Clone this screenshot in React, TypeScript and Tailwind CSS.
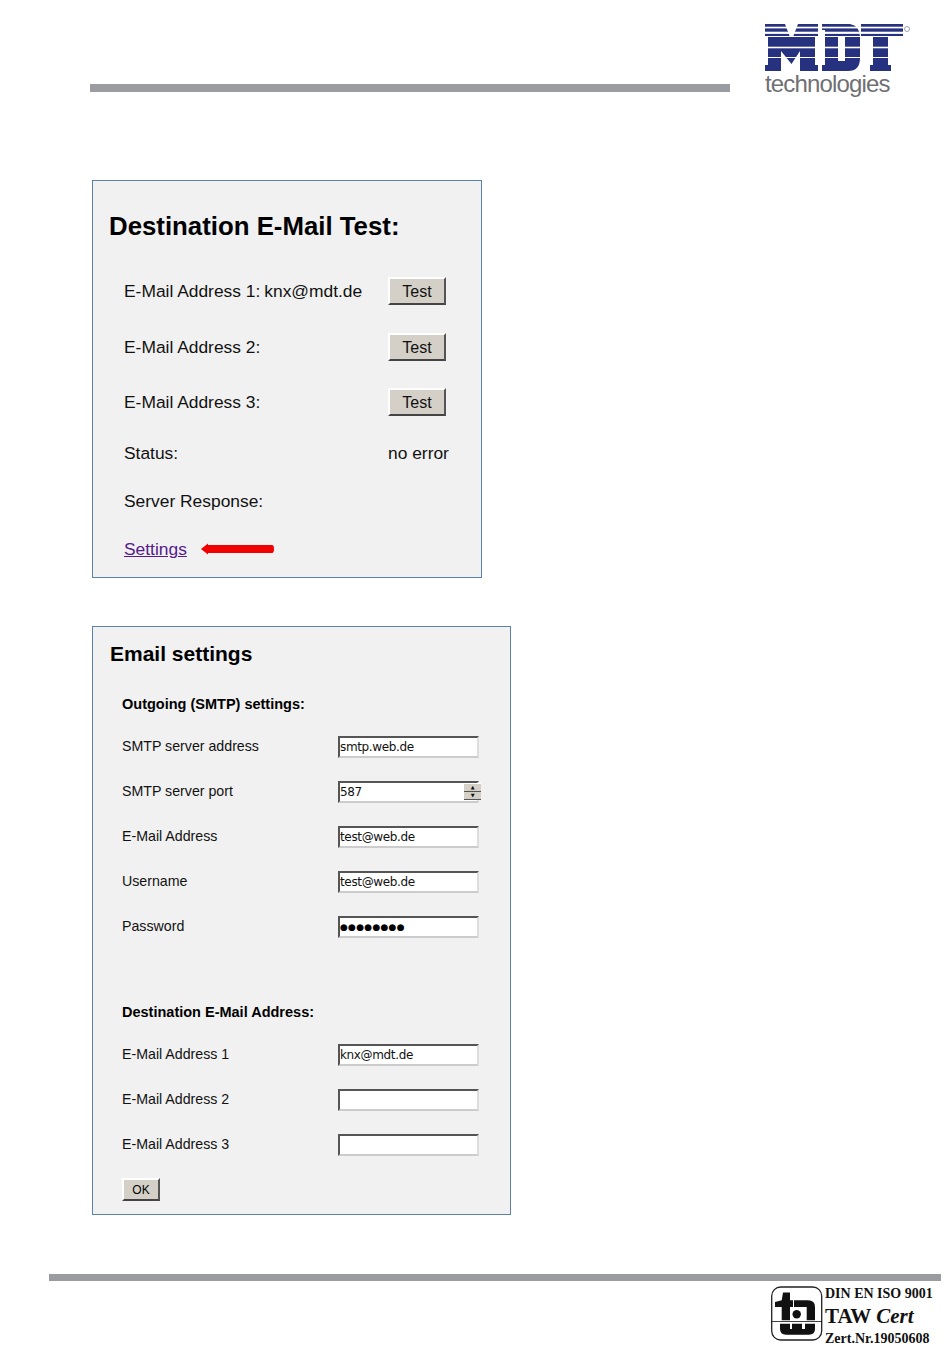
const sans = "font-['Liberation_Sans',Arial,sans-serif]";

function MdtLogo() {
  return (
    <svg width="150" height="48" viewBox="0 0 150 48" className="block">
      <g fill="#26327f">
        <path d="M1 0H21L26 13H29L34 0H54V13H51V41H54V47H36V27L27.5 40L17 27V47H1V41H4V13H1Z" />
        <path d="M58 0H86Q96 2 96 13V34Q96 47 84 47H58V41H61V6H58ZM74 13V37H81V13Z" fillRule="evenodd" />
        <path d="M97 0H139V13H124V41H127V47H106V41H109V13H97Z" />
      </g>
      <g fill="#ffffff">
        <rect x="0" y="2.7" width="142" height="1.7" />
        <rect x="0" y="7.7" width="142" height="2.2" />
        <rect x="0" y="12" width="142" height="1" />
        <rect x="0" y="22.7" width="142" height="1.6" />
        <rect x="0" y="33" width="142" height="1" />
      </g>
      <circle cx="143" cy="5" r="2.5" fill="none" stroke="#8a8f99" strokeWidth="0.8" />
    </svg>
  );
}

function TaLogo() {
  return (
    <svg width="54" height="56" viewBox="0 0 54 56" className="block">
      <rect x="1.7" y="1" width="50" height="53" rx="9" fill="#fff" stroke="#222" strokeWidth="1.3" />
      <g fill="#111">
        <path d="M13 6.5H20V14.3H23V21H20V34.3H11.7V21H5V16L11.7 14.3Z" />
        <path d="M24 14.3H38Q45 14.3 45 21V34.3H36.7V21H24Z" />
        <circle cx="26.7" cy="28.3" r="4.2" />
        <rect x="2" y="35" width="50" height="0.8" />
        <path d="M10 37.7H20V43H22V37.7H32V43H35V37.7H45V43Q45 48.7 39 48.7H16Q10 48.7 10 43Z" />
      </g>
    </svg>
  );
}

function Row({ label, value, test }: { label: string; value?: string; test?: boolean }) {
  return (
    <div className="flex items-center h-[28px] text-[17.4px] text-[#111]">
      <div className="w-[264px] whitespace-nowrap">{label}{value ? <span className="ml-[4px]">{value}</span> : null}</div>
      {test ? (
        <button className="w-[58px] h-[28px] bg-[#d4d0c8] text-[16px] pt-[1px] border-2 border-t-white border-l-white border-r-[#555] border-b-[#444]">Test</button>
      ) : null}
    </div>
  );
}

function Field({ label, value, type, spin }: { label: string; value?: string; type?: string; spin?: boolean }) {
  return (
    <div className="flex items-center h-[22px] mb-[23px] text-[14.2px] text-[#111]">
      <div className="w-[216px]">{label}</div>
      <div className="relative w-[141px] h-[22px] bg-white border-2 border-t-[#555] border-l-[#555] border-r-[#ddd] border-b-[#ccc] flex items-center font-['DejaVu_Sans',sans-serif] text-[12px] tracking-[-0.35px] leading-none">
        {type === "password" ? <span className="text-[9px] tracking-[0.25px] text-black">●●●●●●●●</span> : value}
        {spin ? (
          <div className="absolute left-[124px] top-[0px] w-[17px] h-[17px] flex flex-col">
            <div className="h-[9px] bg-[#d4d0c8] border-t border-white border-b border-b-[#555] text-[5px] leading-[7px] text-center">▲</div>
            <div className="h-[9px] bg-[#d4d0c8] border-b border-[#555] text-[5px] leading-[7px] text-center">▼</div>
          </div>
        ) : null}
      </div>
    </div>
  );
}

export default function App() {
  return (
    <div className={`w-[950px] h-[1369px] bg-white overflow-hidden ${sans}`}>
      <header className="flex items-start h-[180px]">
        <div className="ml-[90px] mt-[84px] w-[640px] h-[8px] bg-[#9b9ca1]" />
        <div className="ml-[34px] mt-[24px] flex flex-col">
          <MdtLogo />
          <div className="-mt-[1px] ml-[1px] text-[24px] tracking-[-0.85px] leading-[26px] text-[#6f7074]">technologies</div>
        </div>
      </header>

      <section className="ml-[92px] w-[390px] h-[398px] bg-[#f1f1f1] border border-[#5b82ad] pl-[16px]">
        <h1 className="mt-[29px] h-[32px] text-[25.8px] leading-[32px] font-bold text-black">Destination E-Mail Test:</h1>
        <div className="pl-[15px] mt-[35px]">
          <Row label="E-Mail Address 1:" value="knx@mdt.de" test />
          <div className="h-[28px]" />
          <Row label="E-Mail Address 2:" test />
          <div className="h-[27px]" />
          <Row label="E-Mail Address 3:" test />
          <div className="h-[23px]" />
          <div className="flex items-center h-[28px] text-[17.4px] text-[#111]">
            <div className="w-[264px]">Status:</div>
            <div>no error</div>
          </div>
          <div className="h-[20px]" />
          <Row label="Server Response:" />
          <div className="h-[20px]" />
          <div className="flex items-center h-[28px] text-[17.4px]">
            <a className="text-[#551a8b] underline">Settings</a>
            <svg width="74" height="12" viewBox="0 0 74 12" className="ml-[14px]">
              <path d="M0 6L7 0.5V2H71Q73 2 73 6Q73 10 71 10H7V11.5Z" fill="#f00000" />
            </svg>
          </div>
        </div>
      </section>

      <section className="ml-[92px] mt-[48px] w-[419px] h-[589px] bg-[#f1f1f1] border border-[#5b82ad] pl-[17px]">
        <h2 className="mt-[14px] h-[26px] text-[21px] leading-[26px] font-bold text-black">Email settings</h2>
        <div className="pl-[12px] mt-[28px]">
          <div className="h-[18px] mb-[23px] text-[14.5px] leading-[18px] font-bold text-black">Outgoing (SMTP) settings:</div>
          <Field label="SMTP server address" value="smtp.web.de" />
          <Field label="SMTP server port" value="587" spin />
          <Field label="E-Mail Address" value="test@web.de" />
          <Field label="Username" value="test@web.de" />
          <Field label="Password" type="password" />
          <div className="h-[42px]" />
          <div className="h-[18px] mb-[23px] text-[14.5px] leading-[18px] font-bold text-black">Destination E-Mail Address:</div>
          <Field label="E-Mail Address 1" value="knx@mdt.de" />
          <Field label="E-Mail Address 2" />
          <Field label="E-Mail Address 3" />
          <button className="block -mt-[1px] w-[38px] h-[23px] bg-[#d4d0c8] text-[12px] border-2 border-t-white border-l-white border-r-[#555] border-b-[#444]">OK</button>
        </div>
      </section>

      <footer className="mt-[59px] ml-[49px] w-[892px]">
        <div className="h-[7px] bg-[#9b9ca1]" />
        <div className="flex justify-end mt-[5px]">
          <div className="flex gap-[1px]">
            <TaLogo />
            <div className="w-[116px] font-['Liberation_Serif',serif] font-bold text-[#111] whitespace-nowrap">
              <div className="text-[14px] leading-[15px] h-[17px]">DIN EN ISO 9001</div>
              <div className="text-[21px] leading-[26px] h-[28px]">TAW <span className="italic">Cert</span></div>
              <div className="text-[14px] leading-[15px]">Zert.Nr.19050608</div>
            </div>
          </div>
        </div>
      </footer>
    </div>
  );
}
